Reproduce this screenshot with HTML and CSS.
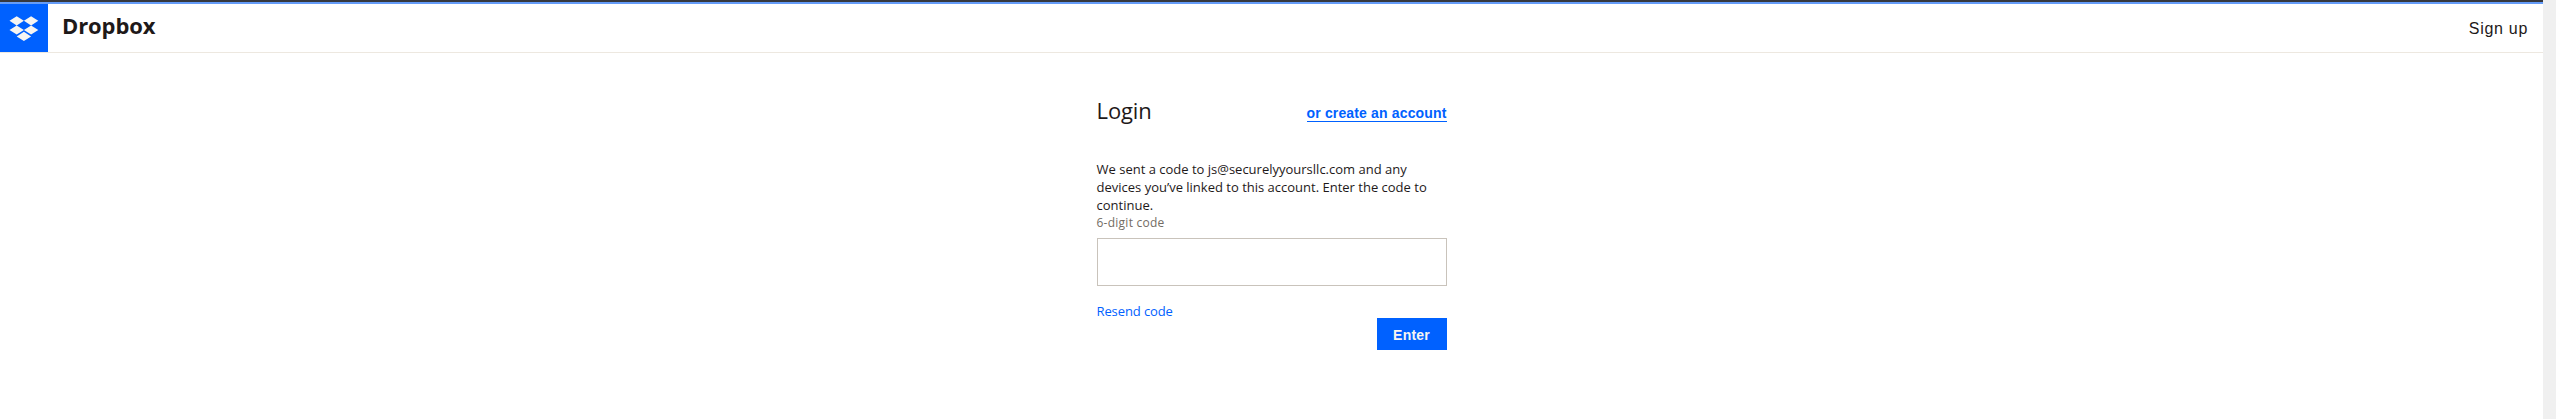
FILE: index.html
```html
<!DOCTYPE html>
<html lang="en">
<head>
<meta charset="utf-8">
<title>Login - Dropbox</title>
<link rel="stylesheet" href="styles.css">
</head>
<body>
<div class="page">
  <header class="header">
    <a class="logo" aria-label="Dropbox home">
      <svg width="48" height="48" viewBox="0 0 48 48" fill="#f7f5f2"><path d="M16.7 12.2l7.2 4.6-7.2 4.6-7.2-4.6zM31.1 12.2l7.2 4.6-7.2 4.6-7.2-4.6zM16.7 21.4l7.2 4.6-7.2 4.6-7.2-4.6zM31.1 21.4l7.2 4.6-7.2 4.6-7.2-4.6zM23.9 27.8l7.2 4.6-7.2 4.6-7.2-4.6z"/></svg>
    </a>
    <span class="brand">Dropbox</span>
    <a class="signup">Sign up</a>
  </header>
  <main class="login">
    <div class="login-head">
      <h1 class="title">Login</h1>
      <a class="create">or create an account</a>
    </div>
    <p class="message">We sent a code to js@securelyyoursllc.com and any<br>devices you’ve linked to this account. Enter the code to<br>continue.</p>
    <label class="label" for="code">6-digit code</label>
    <input class="code" id="code" type="text">
    <a class="resend">Resend code</a>
    <button class="enter">Enter</button>
  </main>
</div>
<div class="scrollbar"></div>
</body>
</html>
```
FILE: styles.css
```css
* { box-sizing: border-box; }
body {
  margin: 0;
  height: 419px;
  display: flex;
  overflow: hidden;
  background: #fff;
  color: #1e1919;
  font-family: "Open Sans", sans-serif;
}
.page { flex: 1; border-top: 2px solid #36383f; }
.scrollbar { width: 13px; background: #f0f0f0; }
.header {
  height: 51px;
  display: flex;
  align-items: center;
  border-top: 2px solid #659cf8;
  border-bottom: 1px solid #ede8e0;
}
.logo { width: 48px; height: 48px; background: #0061ff; }
.logo svg { display: block; }
.brand {
  margin: -6px 0 0 14px;
  font-size: 22px;
  font-weight: 700;
  line-height: 30px;
  letter-spacing: -0.1px;
}
.signup {
  margin: 1px 15px 0 auto;
  font: 16px/20px "Liberation Sans", sans-serif;
  letter-spacing: 0.7px;
}
.login {
  width: 350px;
  margin: 0 auto;
  padding-top: 42px;
  display: flex;
  flex-direction: column;
}
.login-head {
  display: flex;
  justify-content: space-between;
  align-items: flex-start;
  height: 65px;
}
.title { margin: 0; font-size: 22px; font-weight: 400; line-height: 31px; letter-spacing: -0.1px; }
.create {
  height: 27px;
  border-bottom: 1px solid #0061ff;
  color: #0061ff;
  font: 700 14px/36px "Liberation Sans", sans-serif;
  letter-spacing: 0.15px;
}
.message { margin: 0; font-size: 13px; line-height: 18px; }
.label { color: #736c64; font-size: 12px; line-height: 18px; letter-spacing: 0.25px; }
.code { height: 48px; margin: 6px 0 16px; border: 1px solid #c9c3bb; background: #fff; }
.resend { color: #0061ff; font-size: 13px; line-height: 18px; letter-spacing: -0.1px; }
.enter {
  align-self: flex-end;
  width: 70px;
  height: 32px;
  margin-top: -2px;
  padding: 2px 0 0;
  border: 0;
  background: #0061ff;
  color: #f7f5f2;
  font: 700 14px "Liberation Sans", sans-serif;
  letter-spacing: 0.2px;
}
```
